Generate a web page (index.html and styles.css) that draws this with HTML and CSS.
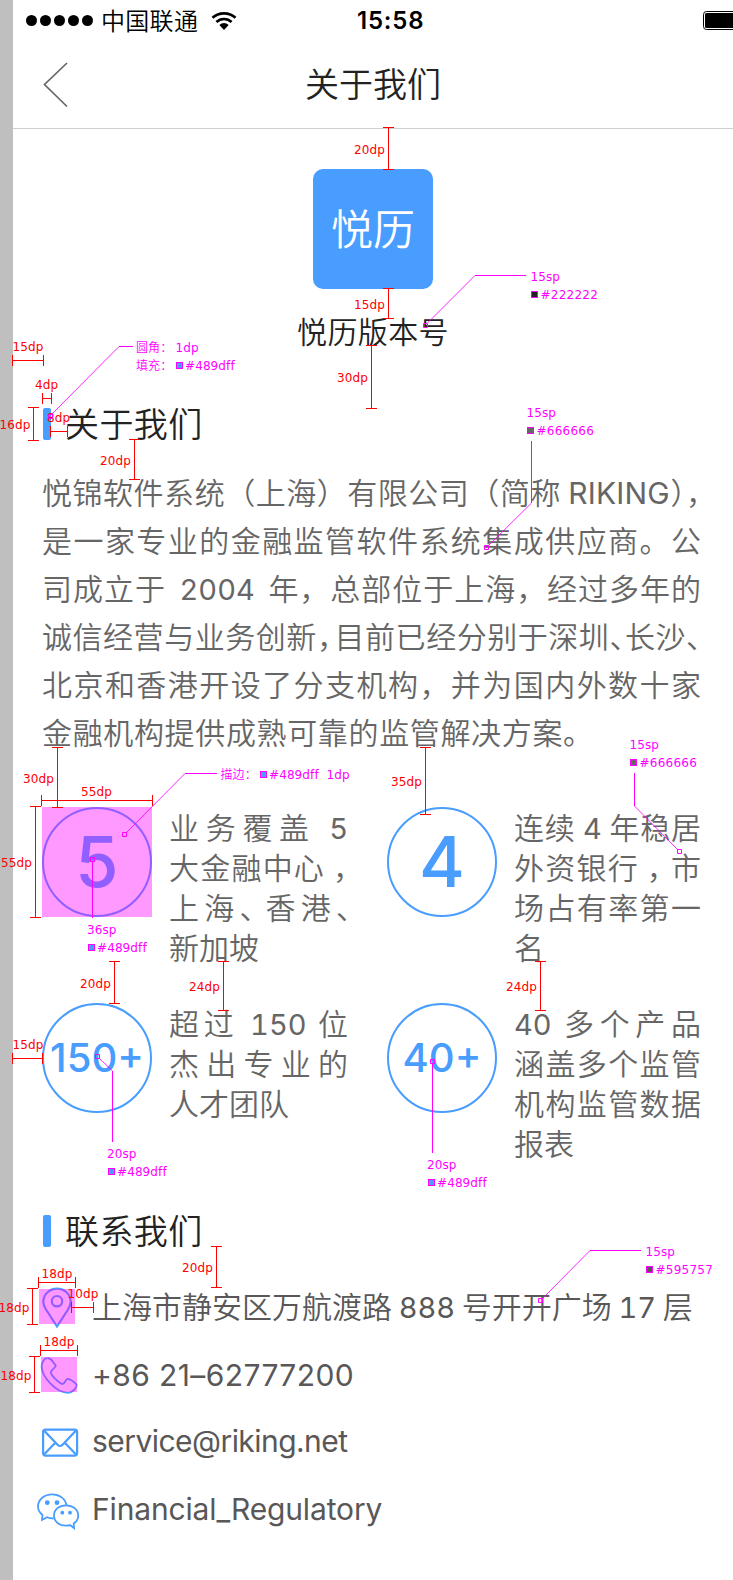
FILE: index.html
```html
<!DOCTYPE html>
<html lang="zh-CN">
<head>
<meta charset="utf-8">
<title>关于我们</title>
<link rel="stylesheet" href="styles.css">
</head>
<body>
<main class="screen">
  <div class="status">
    <div class="carrier">
      <span class="dots"><i></i><i></i><i></i><i></i><i></i></span>
      <span class="operator">中国联通</span>
      <svg class="wifi" width="26" height="20" viewBox="0 0 26 20"><path d="M1.500 6.800C8 .800 18 .800 24.500 6.800M5.400 11C9.600 7 16.400 7 20.600 11" fill="none" stroke="#000" stroke-width="2.700"/><path d="M8.300 14Q13 10 17.700 14L13 19z"/></svg>
    </div>
    <div class="time">15:58</div>
    <svg class="battery" width="30" height="20" viewBox="0 0 30 20"><rect x=".5" y=".5" width="44" height="18" rx="3" fill="#fff" stroke="#000"/><rect x="2" y="2" width="40" height="15" rx="1.500"/></svg>
  </div>
  <header class="nav">
    <svg class="back" width="26" height="46" viewBox="0 0 26 46"><path d="M24 1L1.500 22.500L24 44.500" fill="none" stroke="#666" stroke-width="1.700"/></svg>
    <h1>关于我们</h1>
  </header>
  <section class="brand">
    <div class="logo">悦历</div>
    <p class="version">悦历版本号</p>
  </section>
  <h2 class="heading"><i></i><span>关于我们</span></h2>
  <div class="intro">
    <p>悦锦软件系统（上海）有限公司（简称 <span class="en riking">RIKING</span><span class="half">）</span><span class="half">，</span></p>
    <p>是一家专业的金融监管软件系统集成供应商。公</p>
    <p>司成立于 <span class="num year">2004</span> 年，总部位于上海，经过多年的</p>
    <p>诚信经营与业务创新<span class="comma">，</span>目前已经分别于深圳<span class="half">、</span>长沙<span class="half">、</span></p>
    <p>北京和香港开设了分支机构，并为国内外数十家</p>
    <p class="last">金融机构提供成熟可靠的监管解决方案。</p>
  </div>
  <section class="stats">
    <div class="ring big">5</div>
    <div class="fact narrow"><p>业务覆盖 <span class="num">5</span></p><p>大金融中心 <span class="half">，</span></p><p>上海<span class="pause">、</span>香港<span class="tail">、</span></p><p class="last">新加坡</p></div>
    <div class="ring big">4</div>
    <div class="fact"><p>连续 <span class="num">4</span> 年稳居</p><p>外资银行 <span class="half">，</span> 市</p><p>场占有率第一</p><p class="last">名</p></div>
    <div class="ring">150+</div>
    <div class="fact narrow"><p>超过 <span class="num">150</span> 位</p><p>杰出专业的</p><p class="last">人才团队</p></div>
    <div class="ring">40+</div>
    <div class="fact"><p><span class="num">40</span> 多个产品</p><p>涵盖多个监管</p><p>机构监管数据</p><p class="last">报表</p></div>
  </section>
  <h2 class="heading second"><i></i><span>联系我们</span></h2>
  <ul class="contact">
    <li><svg class="ico" width="44" height="44" viewBox="0 0 44 44"><path d="M20 40.500L9 23.500C7 20.500 6.300 18 6.300 15.800A13.700 13.200 0 0 1 33.700 15.800C33.700 18 33 20.500 31 23.500z"/><circle cx="20" cy="15.200" r="5.200"/></svg><span class="addr">上海市静安区万航渡路 <span class="num">888</span> 号开开广场 <span class="num">17</span> 层</span></li>
    <li><svg class="ico" width="44" height="44" viewBox="0 0 44 44"><path class="thin" d="M10.500 5.200C7 5.200 4.600 10 4.600 14C5.200 24 19 39.500 31 39.800C35 39.800 39.500 35.500 39.800 32C37.500 28.500 33 26 30.500 25.800C28.500 26 28 31 25.500 31C22.500 30.500 14.500 23 13.800 19.500C13.800 17 18.500 15 18.800 12.500C15.500 9 15 5 10.500 5.200z"/></svg><span class="en phone">+86 21–62777200</span></li>
    <li class="up"><svg class="ico" width="44" height="44" viewBox="0 0 44 44"><rect x="6.100" y="10.600" width="34" height="26" rx="2.500"/><path d="M7 11.500L19.800 25Q23 29 26.300 25L39 11.500M7 35.500L18.300 23.800M39 35.500L27.800 23.800"/></svg><span class="en email">service@riking.net</span></li>
    <li><svg class="ico" width="44" height="44" viewBox="0 0 44 44"><path class="thin" d="M16.500 31.500Q12.500 31.500 10 30.300L5 33L5.500 28C2.500 25.500 1 22.500 1 19.500C1 12.500 7.500 7.300 15.200 7.300C22.500 7.300 28.500 12 29.400 18"/><path class="thin" d="M37 41L36.700 36.600C39.800 34.500 41.200 31.500 41.200 28.500C41.200 22.500 35.800 18.300 29 18.300C22 18.300 17 22.500 17 28.500C17 34.500 22 38.700 29 38.700Q31.500 38.700 33.300 38.200z"/><g class="eyes"><circle cx="10.300" cy="15.700" r="2.400"/><circle cx="20" cy="15.700" r="2.400"/><circle cx="25.300" cy="25.700" r="1.900"/><circle cx="33" cy="25.700" r="1.900"/></g></svg><span class="en wechat">Financial_Regulatory</span></li>
  </ul>
</main>
<svg class="notes" width="733" height="1580" viewBox="0 0 733 1580">
  <g class="tint"><rect x="42" y="807" width="110" height="110"/><rect x="39" y="1289" width="36" height="35"/><rect x="41" y="1357" width="36" height="35"/></g>
  <path class="dim" d="M388.500 127v42M383 127.500h11M383 169.500h11M388.500 288v31M383 288.500h11M383 318.500h11M12 360.500h32M12.500 355v11M43.500 355v11M42 398.500h10M42.500 393v11M51.500 393v11M33.500 407v34M28 407.500h11M28 440.500h11M50 431.500h18M50.500 426v11M67.500 426v11M134.500 439v41M129 439.500h11M129 479.500h11M371.500 345v64M366 345.500h11M366 408.500h11M57.500 747v61M52 747.500h11M52 807.500h11M41 800.500h112M41.500 795v11M152.500 795v11M35.500 806v112M30 806.500h11M30 917.500h11M425.500 747v68M420 747.500h11M420 814.500h11M114.500 961v43M109 961.500h11M109 1003.500h11M223.500 961v50M218 961.500h11M218 1010.500h11M540.500 961v50M535 961.500h11M535 1010.500h11M12 1058.500h31M12.500 1053v11M42.500 1053v11M216.500 1246v42M211 1246.500h11M211 1287.500h11M38 1282.500h38M38.500 1277v11M75.500 1277v11M32.500 1288v37M27 1288.500h11M27 1324.500h11M71 1307.500h23M71.500 1302v11M93.500 1302v11M40 1350.500h38M40.500 1345v11M77.500 1345v11M34.500 1356v37M29 1356.500h11M29 1392.500h11"/>
  <g class="red">
    <text x="354" y="154">20dp</text><text x="354" y="309">15dp</text><text x="12.500" y="351">15dp</text><text x="35" y="389">4dp</text><text x="-.5" y="429">16dp</text><text x="47" y="422">8dp</text><text x="100" y="465">20dp</text><text x="337" y="382">30dp</text><text x="23" y="783">30dp</text><text x="81" y="796">55dp</text><text x="1" y="867">55dp</text><text x="391" y="786">35dp</text><text x="80" y="988">20dp</text><text x="189" y="991">24dp</text><text x="506" y="991">24dp</text><text x="12.500" y="1049">15dp</text><text x="182" y="1272">20dp</text><text x="41.500" y="1278">18dp</text><text x="-1.500" y="1312">18dp</text><text x="67.500" y="1298">10dp</text><text x="43.500" y="1346">18dp</text><text x=".5" y="1380">18dp</text>
  </g>
  <path class="lead" d="M475 275.500h51M119 346.500h14M531.500 441v62M217 773.500h-32M634.500 773v33M92.500 862v56M112.500 1071v71M432.500 1064v89M641 1250.500h-51"/>
  <path class="lead diag" d="M427 323.500L475 275.500M52 414L119 346.500M531.500 503L488 546M185 773.500L126 833M634.500 806L678 850M99 1058L112.500 1071M590 1250.500L542 1299"/>
  <path class="lead" d="M423.500 323.500h4v4h-4zM48.500 414.500h4v4h-4zM484.500 545.500h4v4h-4zM122.500 832.500h4v4h-4zM677.500 849.500h4v4h-4zM90.500 857.500h4v4h-4zM95.500 1054.500h4v4h-4zM430.500 1059.500h4v4h-4zM538.500 1298.500h4v4h-4z"/>
  <g class="swatch">
    <rect class="c2" x="531.500" y="291.500" width="6" height="6"/><rect class="blue" x="176.500" y="362.500" width="6" height="6"/><rect class="c6" x="527.500" y="427.500" width="6" height="6"/><rect class="blue" x="260.500" y="771.500" width="6" height="6"/><rect class="c6" x="630.500" y="759.500" width="6" height="6"/><rect class="blue" x="88.500" y="944.500" width="6" height="6"/><rect class="blue" x="108.500" y="1168.500" width="6" height="6"/><rect class="blue" x="428.500" y="1179.500" width="6" height="6"/><rect class="c5" x="646.500" y="1266.500" width="6" height="6"/>
  </g>
  <g class="pink">
    <text x="530.500" y="281">15sp</text><text class="hex" x="540.500" y="299">#222222</text>
    <text class="cn" x="136" y="352">圆角：</text><text x="175.500" y="352">1dp</text><text class="cn" x="136" y="370">填充：</text><text x="185" y="370">#489dff</text>
    <text x="526.500" y="417">15sp</text><text class="hex" x="536.500" y="435">#666666</text>
    <text class="cn" x="220.500" y="779">描边：</text><text x="269" y="779">#489dff</text><text x="326.500" y="779">1dp</text>
    <text x="629.500" y="749">15sp</text><text class="hex" x="639.500" y="767">#666666</text>
    <text x="87" y="934">36sp</text><text x="97" y="952">#489dff</text>
    <text x="107" y="1158">20sp</text><text x="117" y="1176">#489dff</text>
    <text x="427" y="1169">20sp</text><text x="437" y="1187">#489dff</text>
    <text x="645.500" y="1256">15sp</text><text class="hex" x="655.500" y="1274">#595757</text>
  </g>
</svg>
</body>
</html>
```
FILE: styles.css
```css
* { box-sizing: border-box; margin: 0; padding: 0; }
body {
  position: relative;
  width: 733px;
  height: 1580px;
  overflow: hidden;
  background: #bfbfbf;
  font-family: "Noto Sans CJK SC", sans-serif;
  font-weight: 350;
  text-spacing-trim: space-all;
}
.screen { height: 1580px; margin-left: 13px; background: #fff; overflow: hidden; }
.status {
  display: grid;
  grid-template-columns: 344px 1fr 30px;
  height: 41px;
  align-items: center;
}
.carrier { display: flex; align-items: center; padding-left: 13px; color: #000; }
.dots { display: flex; gap: 3px; }
.dots i { width: 11px; height: 11px; border-radius: 50%; background: #000; }
.operator { margin-left: 8px; padding-bottom: 2px; font-size: 24px; line-height: 38px; letter-spacing: .3px; }
.wifi { margin-left: 13px; }
.time { font: 600 24px/40px Inter, sans-serif; color: #000; letter-spacing: .8px; }
.battery { align-self: start; margin-top: 11px; }
.nav {
  display: grid;
  grid-template-columns: 262px 1fr 262px;
  align-items: center;
  height: 88px;
  border-bottom: 1px solid #d0d0d0;
}
.back { margin-left: 30px; }
.nav h1 { padding-bottom: 4px; font-size: 34px; font-weight: 350; line-height: 40px; color: #222; text-align: center; white-space: nowrap; }
.brand { display: flex; flex-direction: column; align-items: center; padding-top: 40px; }
.logo {
  width: 120px;
  height: 120px;
  border-radius: 10px;
  background: #489dff;
  color: #fff;
  font-size: 42px;
  line-height: 116px;
  text-align: center;
}
.version { margin: 21px 0 2px; font-size: 30px; line-height: 40px; letter-spacing: .4px; color: #222; }
.heading {
  display: flex;
  align-items: center;
  gap: 14px;
  height: 34px;
  padding-left: 30px;
  margin-top: 55px;
  font-size: 34px;
  font-weight: 350;
  line-height: 34px;
  color: #222;
}
.heading.second { margin-top: 52px; }
.heading span { padding-bottom: 2px; letter-spacing: .4px; }
.heading i { width: 8px; height: 32px; border-radius: 2px; background: #489dff; }
.intro {
  width: 659px;
  margin: 26px 0 0 29px;
  font-size: 30px;
  line-height: 48px;
  color: #666;
}
.intro p { height: 48px; }
.fact p { height: 40px; }
.intro p, .fact p { white-space: nowrap; text-align: justify; text-align-last: justify; }
.intro .last { text-align-last: left; letter-spacing: .65px; }
.fact .last { text-align-last: left; }
.half { letter-spacing: -.5em; }
.comma { letter-spacing: -.43em; }
.pause { letter-spacing: -.3em; }
.tail { letter-spacing: -.6em; }
.num, .en { font-family: Inter, sans-serif; font-size: 30px; font-weight: 400; line-height: 1; }
.num { font-size: 29px; font-variant-numeric: tabular-nums; }
.year { margin: 0 6px; }
.riking { letter-spacing: .2px; font-size: 30px; }
.stats {
  display: grid;
  grid-template-columns: 110px 201px 110px 187px;
  column-gap: 17px;
  row-gap: 37px;
  margin: 52px 0 0 29px;
}
.narrow { width: 179px; }
.ring {
  width: 110px;
  height: 110px;
  border: 2px solid #489dff;
  border-radius: 50%;
  color: #489dff;
  font: 500 40px/105px Inter, sans-serif;
  text-align: center;
}
.ring.big { font-size: 70px; line-height: 106px; }
.fact { height: 160px; margin-top: -1px; font-size: 30px; line-height: 40px; color: #666; }
.contact { list-style: none; margin: 26px 0 0 24px; color: #595757; font-size: 30px; }
.contact li { display: flex; align-items: center; gap: 11px; height: 67px; white-space: nowrap; }
.contact .up { padding-bottom: 2px; }
.addr { padding-bottom: 5px; line-height: 44px; }
.phone { letter-spacing: .4px; }
.email { letter-spacing: -.55px; }
.wechat { letter-spacing: -.15px; }
.ico { fill: none; stroke: #489dff; stroke-width: 2.200; flex: none; }
.thin { stroke-width: 1.800; }
.eyes { fill: #489dff; stroke: none; }
.notes { position: absolute; inset: 0; }
.tint { fill: #f0f; opacity: .4; }
.dim { stroke: #f00; fill: none; }
.lead { stroke: #f0f; fill: none; }
.diag { opacity: .85; }
.red, .pink { font: 400 12px "DejaVu Sans", "Noto Sans CJK SC", sans-serif; letter-spacing: .1px; }
.hex { letter-spacing: .25px; }
.cn { font-weight: 350; }
.red { fill: #f00; }
.pink { fill: #f0f; }
.swatch { stroke: #f0f; }
.blue { fill: #489dff; }
.c2 { fill: #222; }
.c5 { fill: #595757; }
.c6 { fill: #666; }
```
